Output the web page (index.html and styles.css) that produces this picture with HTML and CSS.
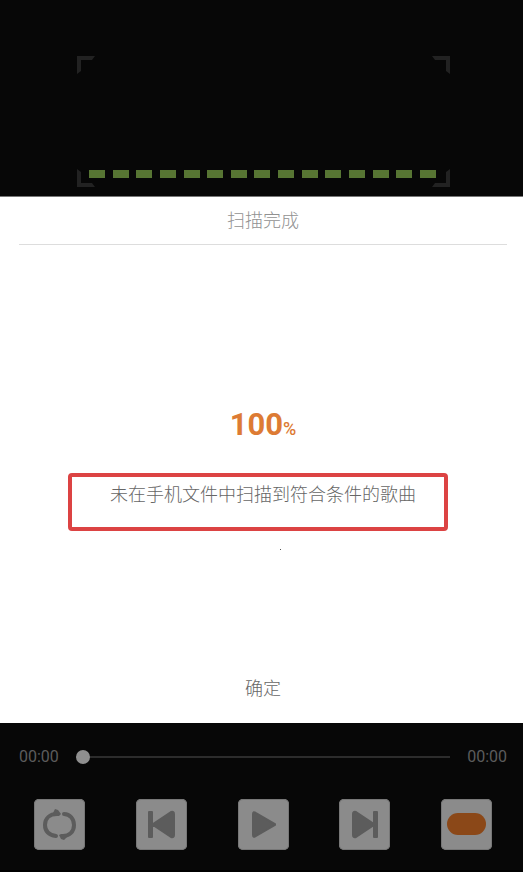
FILE: index.html
```html
<!DOCTYPE html>
<html lang="zh-CN">
<head>
  <meta charset="UTF-8">
  <meta name="viewport" content="width=device-width, initial-scale=1">
  <title>扫描完成</title>
  <link rel="stylesheet" href="styles.css">
</head>
<body>

<div class="scanner">
  <div class="frame">
    <div class="corners">
      <svg class="corner" viewBox="0 0 18 18"><path d="M0 0H18L15 4H4V15L0 18Z"/></svg>
      <svg class="corner" viewBox="0 0 18 18"><path d="M18 0H0L3 4H14V15L18 18Z"/></svg>
    </div>
    <div class="dashes">
      <span></span><span></span><span></span><span></span><span></span>
      <span></span><span></span><span></span><span></span><span></span>
      <span></span><span></span><span></span><span></span><span></span>
    </div>
    <div class="corners">
      <svg class="corner" viewBox="0 0 18 18"><path d="M0 18H18L15 14H4V3L0 0Z"/></svg>
      <svg class="corner" viewBox="0 0 18 18"><path d="M18 18H0L3 14H14V3L18 0Z"/></svg>
    </div>
  </div>
</div>

<main class="dialog">
  <h1 class="title">扫描完成</h1>
  <p class="percent">100<small>%</small></p>
  <p class="message">未在手机文件中扫描到符合条件的歌曲</p>
  <span class="dot"></span>
  <button class="confirm" type="button">确定</button>
</main>

<footer class="player">
  <div class="progress">
    <span>00:00</span>
    <input class="seek" type="range" min="0" max="100" value="0" aria-label="播放进度">
    <span>00:00</span>
  </div>
  <div class="controls">
    <button type="button" aria-label="循环">
      <svg viewBox="0 0 51 51">
        <path d="M23 15C16 15 11 19 11 26C11 32 15 36 22 37M30 15C36 15 40 20 40 26C40 33 35 37 29 37" fill="none" stroke="#5c5c5c" stroke-width="4" stroke-linecap="round"/>
        <path d="M19 14L21 10L24 11L27 15L25 17H20ZM33 38L30 41L27 40L25 36L27 35H32Z" fill="#5c5c5c"/>
      </svg>
    </button>
    <button type="button" aria-label="上一首">
      <svg viewBox="0 0 51 51">
        <path d="M13 13H16V38H13ZM17 25L35 13Q38 12 38 15V36Q38 39 35 38L17 26Z" fill="#5c5c5c" stroke="#5c5c5c" stroke-width="2" stroke-linejoin="round"/>
      </svg>
    </button>
    <button type="button" aria-label="播放">
      <svg viewBox="0 0 51 51">
        <path d="M15 15Q15 12 18 14L37 25V26L18 37Q15 39 15 36Z" fill="#5c5c5c" stroke="#5c5c5c" stroke-width="2" stroke-linejoin="round"/>
      </svg>
    </button>
    <button type="button" aria-label="下一首">
      <svg viewBox="0 0 51 51">
        <path d="M14 15Q14 12 17 13L35 25V26L17 38Q14 39 14 36ZM35 13H38V38H35Z" fill="#5c5c5c" stroke="#5c5c5c" stroke-width="2" stroke-linejoin="round"/>
      </svg>
    </button>
    <button type="button" aria-label="列表">
      <svg viewBox="0 0 51 51">
        <rect x="6" y="14" width="39" height="22" rx="11" fill="#8b4818"/>
      </svg>
    </button>
  </div>
</footer>

</body>
</html>
```
FILE: styles.css
```css
* {
  box-sizing: border-box;
  margin: 0;
  padding: 0;
}

body {
  display: flex;
  flex-direction: column;
  min-height: 100vh;
  background: #070707;
  font-family: Roboto, "Noto Sans CJK SC", sans-serif;
}

button {
  border: none;
  cursor: pointer;
  font-family: inherit;
}

/* scanner frame */
.scanner {
  padding: 56px 73px 9px 77px;
}

.corners {
  display: flex;
  justify-content: space-between;
}

.corner {
  display: block;
  width: 18px;
  height: 18px;
  fill: #222;
}

.dashes {
  display: flex;
  justify-content: space-between;
  margin: 96px 14px -9px 12px;
}

.dashes span {
  width: 16px;
  height: 8px;
  background: #577533;
}

/* dialog */
.dialog {
  display: flex;
  flex: 1;
  flex-direction: column;
  align-items: center;
  padding: 0 16px 16px 19px;
  border-top: 1px solid #777;
  background: #fff;
  color: #666;
}

.title {
  width: 100%;
  border-bottom: 1px solid #ddd;
  color: #919191;
  font-size: 18px;
  font-weight: 300;
  line-height: 47px;
  text-align: center;
}

.percent {
  margin-top: 160px;
  color: #dd7b34;
  font-size: 31px;
  font-weight: 700;
  line-height: 40px;
}

.percent small {
  font-size: 18px;
  font-weight: 500;
}

.message {
  width: 78%;
  height: 58px;
  margin: 24px 10px 0 0;
  padding-left: 10px;
  border: 4px solid #dc4343;
  border-radius: 4px;
  font-size: 18px;
  font-weight: 300;
  line-height: 36px;
  text-align: center;
  white-space: nowrap;
}

.dot {
  width: 1px;
  height: 1px;
  margin: 18px 0 0 34px;
  background: #555;
}

.confirm {
  margin-top: auto;
  padding: 0 32px;
  background: none;
  color: #666;
  font-size: 18px;
  font-weight: 300;
  line-height: 36px;
}

/* player */
.player {
  padding: 20px 0;
  border-bottom: 2px solid #000;
}

.progress {
  display: flex;
  align-items: center;
  gap: 17px;
  padding: 0 16px 0 19px;
  color: #5c5c5c;
  font-size: 16px;
  line-height: 28px;
}

.seek {
  flex: 1;
  min-width: 0;
  height: 14px;
  appearance: none;
  background: linear-gradient(#2c2c2c, #2c2c2c) center / 100% 2px no-repeat;
}

.seek::-webkit-slider-thumb {
  width: 14px;
  height: 14px;
  appearance: none;
  border-radius: 50%;
  background: #8f8f8f;
}

.controls {
  display: flex;
  justify-content: space-between;
  margin-top: 28px;
  padding: 0 31px 0 34px;
}

.controls button {
  width: 51px;
  height: 51px;
  border-radius: 5px;
  background: #8b8b8b;
  box-shadow: inset 0 0 0 1px #777;
}

.controls svg {
  display: block;
  width: 100%;
}
```
